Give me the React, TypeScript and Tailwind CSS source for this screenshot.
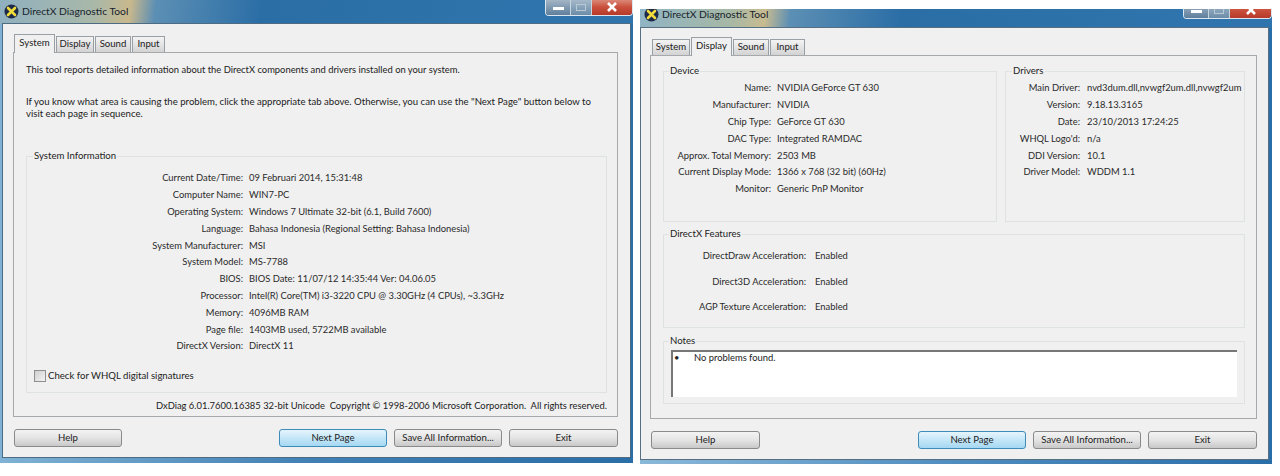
import { ReactNode } from "react";

const font = "font-['Lato','Noto_Sans',sans-serif]";

const systemRows = [
  ["Current Date/Time:", "09 Februari 2014, 15:31:48"],
  ["Computer Name:", "WIN7-PC"],
  ["Operating System:", "Windows 7 Ultimate 32-bit (6.1, Build 7600)"],
  ["Language:", "Bahasa Indonesia (Regional Setting: Bahasa Indonesia)"],
  ["System Manufacturer:", "MSI"],
  ["System Model:", "MS-7788"],
  ["BIOS:", "BIOS Date: 11/07/12 14:35:44 Ver: 04.06.05"],
  ["Processor:", "Intel(R) Core(TM) i3-3220 CPU @ 3.30GHz (4 CPUs), ~3.3GHz"],
  ["Memory:", "4096MB RAM"],
  ["Page file:", "1403MB used, 5722MB available"],
  ["DirectX Version:", "DirectX 11"],
];

const deviceRows = [
  ["Name:", "NVIDIA GeForce GT 630"],
  ["Manufacturer:", "NVIDIA"],
  ["Chip Type:", "GeForce GT 630"],
  ["DAC Type:", "Integrated RAMDAC"],
  ["Approx. Total Memory:", "2503 MB"],
  ["Current Display Mode:", "1366 x 768 (32 bit) (60Hz)"],
  ["Monitor:", "Generic PnP Monitor"],
];

const driverRows = [
  ["Main Driver:", "nvd3dum.dll,nvwgf2um.dll,nvwgf2um"],
  ["Version:", "9.18.13.3165"],
  ["Date:", "23/10/2013 17:24:25"],
  ["WHQL Logo'd:", "n/a"],
  ["DDI Version:", "10.1"],
  ["Driver Model:", "WDDM 1.1"],
];

const DxIcon = () => (
  <svg width="15" height="15" viewBox="0 0 15 15" className="shrink-0">
    <circle cx="7.5" cy="7.5" r="7" fill="#1d2a4a" />
    <path d="M4 4l7 7M11 4l-7 7" stroke="#f2dc3c" strokeWidth="2.6" strokeLinecap="round" />
  </svg>
);

const WindowControls = ({ cropped }: { cropped?: boolean }) => (
  <div className={`flex overflow-hidden items-end rounded-b-[4px] border border-t-0 border-[#dbe6ee] ${cropped ? "h-[10px] w-[89px]" : "h-[16px] w-[88px]"}`}>
    <div className="flex h-[16px] w-[25px] shrink-0 items-center justify-center border-r border-[#c5d5e0] bg-gradient-to-b from-[#a9b9c8] to-[#5f7f9c]">
      <div className="mt-[3px] h-[3px] w-[11px] bg-white" />
    </div>
    <div className="flex h-[16px] w-[21px] shrink-0 items-center justify-center border-r border-[#c5d5e0] bg-gradient-to-b from-[#a9bccb] to-[#6b8ca8]">
      <div className="h-[7px] w-[10px] border border-[#b8cad8]" />
    </div>
    <div className="flex h-[16px] flex-1 items-center justify-center bg-gradient-to-b from-[#dc8f80] via-[#c9503c] to-[#b8392a]">
      <svg width="12" height="10" viewBox="0 0 12 10">
        <path d="M2 1l8 8M10 1l-8 8" stroke="#fff" strokeWidth="2.6" />
      </svg>
    </div>
  </div>
);

const Tab = ({ label, active, width }: { label: string; active?: boolean; width: string }) => (
  <div
    className={`flex items-center justify-center border border-[#98a0a6] text-[9.6px] text-[#222] ${width} ${
      active
        ? "relative z-10 -mb-px h-[19px] border-b-0 bg-[#f0f0f0] pb-[2px]"
        : "h-[16px] border-b-0 bg-gradient-to-b from-[#f4f4f4] to-[#d3d3d3]"
    }`}
  >
    {label}
  </div>
);

const Button = ({ label, primary, width }: { label: string; primary?: boolean; width: string }) => (
  <div
    className={`flex h-[18px] items-center justify-center rounded-[3px] border text-[9.6px] text-[#222] ${width} ${
      primary
        ? "border-[#3c8bb8] bg-gradient-to-b from-[#e6f5fc] via-[#c4e6f7] to-[#a5d8f3]"
        : "border-[#8a8a8a] bg-gradient-to-b from-[#f3f3f3] via-[#e4e4e4] to-[#c8c8c8]"
    }`}
  >
    {label}
  </div>
);

const Group = ({ title, className, indent, children }: { title: string; className: string; indent: string; children: ReactNode }) => (
  <fieldset className={`min-w-0 shrink-0 border border-[#dfe2e3] ${className}`}>
    <legend className={`h-[14px] bg-[#f0f0f0] px-px text-[9.6px] leading-[14px] text-[#222] ${indent}`}>{title}</legend>
    {children}
  </fieldset>
);

const Rows = ({ rows, labelWidth, gap }: { rows: string[][]; labelWidth: string; gap: string }) => (
  <div className="flex flex-col">
    {rows.map(([label, value]) => (
      <div key={label} className={`flex h-[16.8px] items-center text-[9.4px] text-[#2a2a2a] ${gap}`}>
        <span className={`shrink-0 whitespace-nowrap text-right ${labelWidth}`}>{label}</span>
        <span className="whitespace-nowrap">{value}</span>
      </div>
    ))}
  </div>
);

const TitleBar = ({ height, cropped, fade }: { height: string; cropped?: boolean; fade: string }) => (
  <div className={`flex shrink-0 items-start justify-between overflow-hidden ${height} ${fade}`}>
    <div className={`flex items-center gap-[3px] pl-[4px] ${cropped ? "-mt-[2px]" : "pt-[4px]"}`}>
      <DxIcon />
      <span className="text-[10.3px] leading-[15px] text-[#17222c]">DirectX Diagnostic Tool</span>
    </div>
    <WindowControls cropped={cropped} />
  </div>
);

const Footer = ({ spacer }: { spacer: string }) => (
  <div className="flex pl-px pt-[12px]">
    <Button label="Help" width="w-[109px]" />
    <div className={`flex gap-[7px] ${spacer}`}>
      <Button label="Next Page" primary width="w-[108px]" />
      <Button label="Save All Information..." width="w-[108px]" />
      <Button label="Exit" width="w-[109px]" />
    </div>
  </div>
);

const SystemWindow = () => (
  <div className="flex h-[463px] w-[633px] shrink-0 flex-col bg-gradient-to-r from-[#7fb2d4] via-[#3f7fb4] to-[#2a6ea8]">
    <TitleBar
      height="h-[24px]"
      fade="bg-[linear-gradient(97deg,#8fb0c0_0px,#a9b8a8_95px,#c9b88c_130px,#5c8fb4_155px,#2b6ea6_260px,#2f74ac_540px)]"
    />
    <div className="ml-[3px] mr-[3px] flex h-[433px] flex-col bg-[#f0f0f0] pl-[10px] pr-[12px] pt-[10px] shadow-[0_0_0_1px_#4d6c84]">
      <div className="flex items-end gap-px pl-px">
        <Tab label="System" active width="w-[41px]" />
        <Tab label="Display" width="w-[38px]" />
        <Tab label="Sound" width="w-[36px]" />
        <Tab label="Input" width="w-[33px]" />
      </div>
      <div className="flex h-[365px] flex-col border border-[#a5a9ac] pl-[12px] pr-[10px]">
        <p className="pt-[10px] text-[9.4px] leading-[14px] text-[#222]">
          This tool reports detailed information about the DirectX components and drivers installed on your system.
        </p>
        <p className="whitespace-nowrap pt-[19px] text-[9.6px] leading-[12px] text-[#222]">
          If you know what area is causing the problem, click the appropriate tab above. Otherwise, you can use the "Next Page" button below to
          <br />
          visit each page in sequence.
        </p>
        <Group title="System Information" indent="ml-[6px]" className="mt-[29px] h-[244px] pt-[7px]">
          <Rows rows={systemRows} labelWidth="w-[216px]" gap="gap-[6px]" />
          <div className="flex items-center gap-[2px] pl-[7px] pt-[14px] text-[9.6px] text-[#222]">
            <div className="h-[12px] w-[12px] border border-[#8e8f8f] bg-gradient-to-br from-[#cfcfcf] to-[#f4f4f4]" />
            Check for WHQL digital signatures
          </div>
        </Group>
        <p className="whitespace-pre pt-[6px] text-right text-[9.4px] leading-[14px] text-[#222]">
          DxDiag 6.01.7600.16385 32-bit Unicode  Copyright © 1998-2006 Microsoft Corporation.  All rights reserved.
        </p>
      </div>
      <Footer spacer="ml-[157px]" />
    </div>
  </div>
);

const DisplayWindow = () => (
  <div className="ml-[7px] mt-[9px] flex h-[455px] w-[632px] shrink-0 flex-col bg-gradient-to-r from-[#8ab8d8] via-[#4f8dbf] to-[#2a6ea8]">
    <TitleBar
      cropped
      height="h-[19px]"
      fade="bg-[linear-gradient(97deg,#8fb4c4_0px,#a6b8a6_90px,#c8bb90_125px,#5c8fb4_150px,#2b6ea6_260px,#2f74ac_540px)]"
    />
    <div className="ml-[1px] mr-[4px] flex h-[431px] flex-col bg-[#f0f0f0] pl-[9px] pr-[11px] pt-[9px] shadow-[0_0_0_1px_#566f82]">
      <div className="flex items-end gap-px pl-[2px]">
        <Tab label="System" width="w-[38px]" />
        <Tab label="Display" active width="w-[41px]" />
        <Tab label="Sound" width="w-[36px]" />
        <Tab label="Input" width="w-[35px]" />
      </div>
      <div className="flex h-[364px] flex-col border border-[#a5a9ac] pl-[12px] pr-[9px] pt-[8px]">
        <div className="flex gap-[8px]">
          <Group title="Device" indent="ml-[5px]" className="h-[158px] w-[334px] pt-[2px]">
            <Rows rows={deviceRows} labelWidth="w-[107px]" gap="gap-[6px]" />
          </Group>
          <Group title="Drivers" indent="ml-[6px]" className="h-[158px] w-[240px] pt-[2px]">
            <Rows rows={driverRows} labelWidth="w-[74px]" gap="gap-[7px]" />
          </Group>
        </div>
        <Group title="DirectX Features" indent="ml-[5px]" className="mt-[5px] h-[101px] w-[582px]">
          <div className="flex flex-col gap-[9px] pt-[7px]">
            {["DirectDraw", "Direct3D", "AGP Texture"].map((name) => (
              <div key={name} className="flex h-[16.6px] items-center gap-[9px] text-[9.4px] text-[#2a2a2a]">
                <span className="w-[142px] text-right">{name} Acceleration:</span>
                <span>Enabled</span>
              </div>
            ))}
          </div>
        </Group>
        <Group title="Notes" indent="ml-[5px]" className="mt-[6px] h-[70px] w-[582px]">
          <div className="px-[7px] pt-[2px]">
            <div className="flex h-[47px] items-start border-l-2 border-t-2 border-[#777] bg-white pl-[1px] text-[9.4px] leading-[12px] text-[#222]">
              <span className="w-[20px]">•</span>
              No problems found.
            </div>
          </div>
        </Group>
      </div>
      <Footer spacer="ml-[158px]" />
    </div>
  </div>
);

export default function App() {
  return (
    <div className={`flex h-[476px] w-[1280px] items-start overflow-hidden bg-white ${font}`}>
      <SystemWindow />
      <DisplayWindow />
    </div>
  );
}
